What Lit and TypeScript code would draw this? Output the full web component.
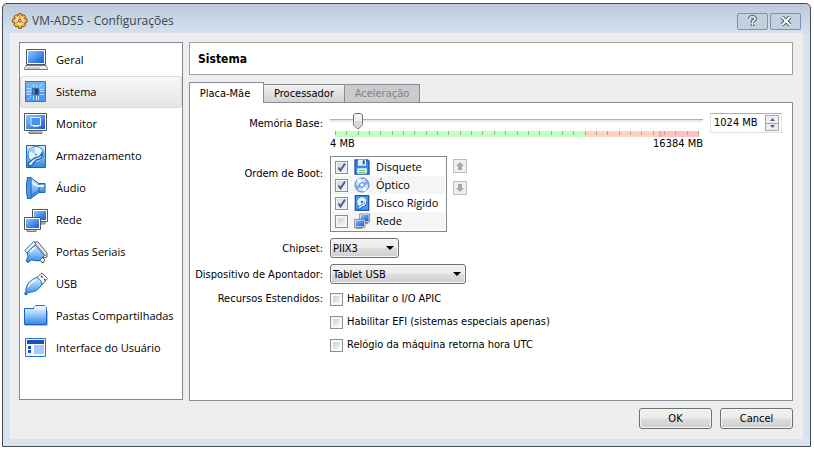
import { LitElement, html, svg, css, type TemplateResult } from "lit";
import { customElement, state } from "lit/decorators.js";
import { classMap } from "lit/directives/class-map.js";

const defs = svg`<defs>
  <linearGradient id="b" x1="0" y1="0" x2="1" y2="1"><stop offset="0" stop-color="#8cc8ff"/><stop offset="1" stop-color="#1257dc"/></linearGradient>
  <linearGradient id="l" x1="0" y1="0" x2="0" y2="1"><stop offset="0" stop-color="#d8f1ff"/><stop offset="1" stop-color="#2f87ea"/></linearGradient>
</defs>`;

const network = svg`
  <path d="M13 14h8v2h-8zM3 21.500h9v2H3z" fill="#ccc" stroke="#777"/>
  <path d="M8.500 1.500h15v12h-15z" fill="#fff" stroke="#555"/><path d="M10 3h12v9H10z" fill="url(#b)"/>
  <path d="M.5 9.500h16v12H.5z" fill="#fff" stroke="#555"/><path d="M2 11h13v9H2z" fill="url(#b)"/>`;

const disk = svg`
  <path d="M2.500 1.500h19v22h-19z" fill="url(#l)" stroke="#1b62b8"/>
  <circle cx="12" cy="10.500" r="8" fill="#e4f5ff" stroke="#2f7fd0"/>
  <path d="M12 10.500 5 7a8 8 0 0 1 5-4z" fill="#9ed0f6"/>
  <circle cx="12" cy="10.500" r="1.500" fill="#2f7fd0" stroke="#fff"/>
  <path d="M18 9c1 5-2 7-6 7l-4 5c-2 2-5 0-3-2.500l5-4c2-2 5 1 8-5.500z" fill="#fff" stroke="#1b62b8" stroke-width="1.500"/>`;

const icons: Record<string, TemplateResult> = {
  general: svg`<path d="M2.500 1.500h19v15h-19z" fill="#fff" stroke="#555"/><path d="M4 3h16v12H4z" fill="url(#b)"/>
    <path d="M2 17.500h20l1.500 3v1H.5v-1z" fill="#eee" stroke="#777"/><path d="M3 20h13" stroke="#aaa"/>`,
  system: svg`<path d="M1.500 1.500h20v20h-20z" fill="#4a9af0" stroke="#2f7ad8"/><path d="M2 2h19v7L2 15z" fill="#70b2f6"/>
    <path d="M8.500 8.500h6v6h-6z" fill="#243c60" stroke="#3568a8"/><path d="M9 9h2v5H9z" fill="#5a7aa0"/>
    <path d="M3 8.500h4M3 11.500h4M3 14.500h4M9.500 4v3M12.500 5v2M15 7l3-3M16 9.500h4M16 11.500h4M16 14.500h4M9.500 16v4M12.500 16v4M14.500 16v4M7 16l-3 4" stroke="#bfe0ff" fill="none"/>`,
  display: svg`<path d="M.5 1.500h22v17H.5z" fill="#fff" stroke="#555"/><path d="M2 3h19v14H2z" fill="url(#b)"/>
    <path d="M7 5.500h9.500v8H7z" fill="#4d91ef" stroke="#e4f2ff"/><path d="M9 14.500h6" stroke="#a8d2ff"/><path d="M5 20h13v1.500H5z" fill="#ddd" stroke="#777"/>`,
  storage: disk,
  audio: svg`<path d="M13 7.500h8v9h-8z" fill="#62a9ec" stroke="#1b62b8"/><path d="M3.500 1.500h3l8.500 6v9l-8.500 6h-3z" fill="url(#l)" stroke="#1b62b8"/>
    <path d="M3.500 1.500h3.500v21H3.500L2.500 16V8z" fill="#4c9ce8" stroke="#1b62b8"/><path d="M8 7l6 3h6" stroke="#e4f5ff" stroke-width="2" fill="none"/><path d="M8 19l6-4h6" stroke="#1f6fd0" fill="none"/>`,
  network,
  serial: svg`<path d="m10 2 4 0 9 11v4l-3 1L8 6zM17 16l4 4-2 3-4-3z" fill="#f2f2f2" stroke="#555"/><path d="m11 3 11 13" stroke="#888"/>
    <path d="M11.500 5.500 20.500 15.500 15 21 7.500 20 4 22.500 2 21l2-4-1-6z" fill="url(#l)" stroke="#1b62b8"/>
    <path d="m.8 10.500 9-9 2 2.500-9 9z" fill="#eef6ff" stroke="#2c68ac"/><path d="m6 12 5-5" stroke="#fff" stroke-width="1.500"/>`,
  usb: svg`<path d="m12 6 6-5 5.500 5.500L18 13z" fill="#fff" stroke="#666"/><path d="m17 4 1.500 1.500M20 7l1.500 1.500" stroke="#444" stroke-width="1.500"/>
    <path d="M12.500 5.500c3 1 5 3 5.500 6.500-2 4-6 8-11 8l-3 .5-1.500 2.500-2-1L2 19c-1-5 5-12 10.500-13.500z" fill="url(#l)" stroke="#1b62b8"/><path d="M4 15c2-4 5-6 8-7" stroke="#eefaff" stroke-width="1.500" fill="none"/>`,
  folder: svg`<path d="M9.500 6V3.500l2-2h9l2 2V8" fill="#e2f3ff" stroke="#2c72c0"/><path d="M.5 4.500h22v16H.5z" fill="url(#l)" stroke="#1b62b8"/>
    <path d="M10 2.500h12v3H10z" fill="#e2f3ff"/><path d="M1 21.500h22.500V7" stroke="#bbb" fill="none"/>`,
  ui: svg`<path d="M1.500 2.500h20v18h-20z" fill="#f4faff" stroke="#2c72c8"/><path d="M3 4h17v4H3z" fill="#1c50b4"/><path d="M4 10h3v3H4zM4 14h3v3H4z" fill="#1c50b4"/><path d="M10 9h10v9H10z" fill="#a5c8ff"/>`,
  floppy: svg`<path d="M1.500 1.500h19l2 2v19h-21z" fill="#3a8ae8" stroke="#1a54b8" stroke-width="2"/><path d="M6 1h12v9H6z" fill="#e4f5ff"/><path d="M13 2h3v6h-3z" fill="#1a54b8"/><path d="M5 14h14v8H5z" fill="#fff"/><path d="M7 17h10M7 20h10" stroke="#5ac05a" stroke-width="1.500"/>`,
  optical: svg`<circle cx="12" cy="12" r="10.500" fill="#c9e2fb" stroke="#3a78cc" stroke-width="1.500"/><path d="M12 12 4 5a10 10 0 0 1 6-3zM12 12l8 7a10 10 0 0 1-6 3z" fill="#fff"/><path d="m12 12 7-7a10 10 0 0 1 3 6zM12 12l-7 7a10 10 0 0 1-3-6z" fill="#7dacf0"/><circle cx="12" cy="12" r="3.500" fill="#fff" stroke="#3a78cc" stroke-width="1.500"/>`,
  harddisk: svg`<path d="M2 1h20v22H2z" fill="#4a9af0" stroke="#1b56b0" stroke-width="2"/><circle cx="12" cy="10.500" r="7" fill="#e4f5ff"/><circle cx="12" cy="10.500" r="2" fill="#2f6fd0"/><path d="M18 9c1 5-3 7-6 7l-5 5" fill="none" stroke="#1b56b0" stroke-width="4"/><path d="M17.500 9c1 5-3 7-6 7l-4 4" fill="none" stroke="#fff" stroke-width="2"/>`,
  gear: svg`<path d="m10 1 4 0 .8 3 2.700-1.600 3 3L19 8l3.500 1v5L19 15l1.500 3-3 3-2.700-1.500L14 23h-4l-1-3.500L6 21l-3-3 1.500-3L1 14V9.500L4.500 8 3 5.400l3-3L9 4z" fill="#f8b84c" stroke="#8a4c12" stroke-width="1.500"/><circle cx="11.700" cy="11.700" r="6.500" fill="#ffdf9a"/><circle cx="11.700" cy="11.700" r="2" fill="#fff" stroke="#5a3410" stroke-width="1.500"/><path d="M11.700 5v4M6 15l3-2M17 15l-3-2" stroke="#b8731f" stroke-width="1.500"/>`,
};

const icon = (name: string, cls: string) =>
  html`<svg class=${cls} viewBox="0 0 24 24" aria-hidden="true">${defs}${icons[name]}</svg>`;

const pages = [
  ["general", "Geral"], ["system", "Sistema"], ["display", "Monitor"], ["storage", "Armazenamento"], ["audio", "Áudio"],
  ["network", "Rede"], ["serial", "Portas Seriais"], ["usb", "USB"], ["folder", "Pastas Compartilhadas"], ["ui", "Interface do Usuário"],
];
const boot: [string, string, boolean][] = [
  ["floppy", "Disquete", true], ["optical", "Óptico", true], ["harddisk", "Disco Rígido", true], ["network", "Rede", false],
];
const extended = ["Habilitar o I/O APIC", "Habilitar EFI (sistemas especiais apenas)", "Relógio da máquina retorna hora UTC"];

@customElement("app-root")
export class AppRoot extends LitElement {
  @state() private page = "system";
  @state() private memory = 1024;

  static styles = css`
    :host {
      display: flex; box-sizing: border-box; min-height: 100vh; padding: 3px 3px 4px 2px; background: #fff;
      font: 11px/14px "DejaVu Sans Condensed", "Liberation Sans", sans-serif; color: #000;
    }
    * { box-sizing: border-box; }
    button, input, select { font: inherit; color: inherit; margin: 0; padding: 0; }
    svg { display: block; flex: none; }
    .window {
      flex: 1; min-width: 0; display: flex; flex-direction: column; padding: 0 7px 7px;
      border: 1px solid #484a4d; border-radius: 5px 5px 0 0;
      background: linear-gradient(#bccad9, #d7e3f1 32px, #d7e3f1);
    }
    .titlebar { display: flex; align-items: center; gap: 4px; height: 29px; padding: 5px 2px 0; }
    .title { flex: 1; margin: 0; font: 12px/18px "Open Sans", sans-serif; color: #3c4650; }
    .i16 { width: 16px; height: 16px; }
    .i24 { width: 24px; height: 24px; }
    .caption { display: flex; align-items: center; justify-content: center; width: 31px; height: 17px; border: 1px solid #8290ac; border-radius: 2px; background: #c3d0df; }
    .caption + .caption { margin-left: -2px; }
    .body { flex: 1; display: grid; grid-template-columns: 164px minmax(0, 1fr); grid-template-rows: 1fr auto; gap: 0 6px; padding: 9px 10px 10px 9px; background: #eee; }
    .pages { display: flex; flex-direction: column; padding: 1px 0 0; border: 1px solid #828790; background: #fff; margin-bottom: 1px; }
    .page { display: flex; align-items: center; gap: 8px; height: 32px; padding: 0 3px; border: 1px solid transparent; border-radius: 3px; background: none; font: 11px/16px "Open Sans", sans-serif; text-align: left; white-space: nowrap; }
    .page.on { border-color: #d9d9d9; background: linear-gradient(#f8f8f8, #e5e5e5); }
    .main { display: flex; flex-direction: column; min-width: 0; }
    .heading { margin: 0 0 7px; height: 33px; padding: 0 8px; border: 1px solid #a0a0a0; background: #fff; font-size: 12px; line-height: 32px; }
    .tabs { display: flex; align-items: flex-end; height: 20px; position: relative; }
    .tab { height: 18px; padding: 1px 0 0; border: 1px solid #898c95; border-left-width: 0; border-bottom: 0; background: linear-gradient(#f2f2f2, #d2d2d2); line-height: 16px; width: 81px; }
    .tab.on { height: 21px; width: 75px; margin-bottom: -1px; padding-right: 3px; border-left-width: 1px; background: #fff; }
    .tab:disabled { width: 75px; background: #cbcbcb; color: #838383; }
    .pane { flex: 1; border: 1px solid #898c95; background: #fff; padding: 10px 10px 10px 4px; display: grid; grid-template-columns: 129px minmax(0, 1fr); gap: 6px 7px; align-content: start; }
    .label { text-align: right; white-space: nowrap; }
    .label.memory { padding-top: 4px; }
    .label.order { padding-top: 11px; }
    .label.combo { padding-top: 4px; }
    .row { display: flex; align-items: flex-start; gap: 7px; }
    .scale { flex: 1; min-width: 0; }
    .slider { display: block; appearance: none; width: 100%; height: 17px; background: linear-gradient(#b0b0b0, #b0b0b0) 0 6px / 100% 1px no-repeat, linear-gradient(#e8e9e9, #e8e9e9) 0 7px / 100% 2px no-repeat; }
    .slider::-webkit-slider-thumb {
      appearance: none; width: 10px; height: 17px; border: 0;
      background: url("data:image/svg+xml,%3Csvg xmlns='http://www.w3.org/2000/svg' width='10' height='17'%3E%3Cpath d='M2 .5h6L9.500 2v10L5 16 .5 12V2z' fill='%23f0f0f0' stroke='%23707070'/%3E%3Cpath d='M2 8h6v4l-3 3-3-3z' fill='%23d8d8d8'/%3E%3C/svg%3E");
    }
    .ticks { display: flex; justify-content: space-between; height: 6px; margin: 1px 4px 0 5px; background: linear-gradient(90deg, #c2ffc2 69%, #ffd2bf 69%, #ffd2bf 89%, #ff9e8f 89%, #ffc1c1 90%); }
    .tick { width: 1px; height: 4px; background: #a2aa9a; }
    .ends { display: flex; justify-content: space-between; line-height: 14px; height: 13px; }
    .spin { display: flex; width: 72px; height: 20px; padding: 1px 2px 1px 3px; border: 1px solid #dce3ea; border-top-color: #abadb3; border-radius: 1px; }
    .spin input { width: 0; flex: 1; border: 0; outline: 0; background: none; }
    .steps { display: flex; flex-direction: column; width: 14px; border: 1px solid #a9a9a9; }
    .step { display: flex; flex: 1; align-items: center; justify-content: center; border: 0; background: #eee; }
    .step + .step { border-top: 1px solid #a9a9a9; }
    .boot { width: 117px; padding: 1px; margin: 0; border: 1px solid #828790; list-style: none; }
    .boot li { height: 18px; padding-left: 3px; }
    .boot li:nth-child(even) { background: #f5f5f5; }
    .boot label { display: flex; align-items: center; height: 18px; gap: 6px; font: 11px/18px "Open Sans", sans-serif; white-space: nowrap; }
    .check { appearance: none; flex: none; width: 13px; height: 13px; border: 1px solid #8e8f8f; background: linear-gradient(135deg, #cbcfd5, #f6f6f6) content-box; padding: 2px; outline: 1px solid #f4f4f4; outline-offset: -2px; }
    .check:checked { padding: 0; background: url("data:image/svg+xml,%3Csvg xmlns='http://www.w3.org/2000/svg' width='11' height='11'%3E%3Cpath d='M2.500 5.500 4.500 8.500 9 1.500' fill='none' stroke='%234b5f97' stroke-width='2'/%3E%3C/svg%3E") no-repeat, linear-gradient(135deg, #d0d4d9, #f6f6f6); }
    .moves { display: flex; flex-direction: column; gap: 8px; padding-top: 3px; margin-left: -1px; }
    .move { display: flex; align-items: center; justify-content: center; width: 14px; height: 14px; border: 1px solid #bcbcbc; background: #f0f0f0; }
    .push, .combo-box { border: 1px solid #707070; border-radius: 3px; background: linear-gradient(#f2f2f2, #ebebeb 49%, #dddddd 51%, #cfcfcf); box-shadow: inset 0 0 0 1px #f6f6f6; }
    .combo-box {
      appearance: none; display: block; height: 20px; padding: 1px 18px 0 2px;
      background: url("data:image/svg+xml,%3Csvg xmlns='http://www.w3.org/2000/svg' width='8' height='4'%3E%3Cpath d='M0 0h8L4 4z'/%3E%3C/svg%3E") right 4px center no-repeat, linear-gradient(#f2f2f2, #ebebeb 49%, #dddddd 51%, #cfcfcf);
    }
    .combo-box.short { width: 69px; }
    .combo-box.long { width: 136px; }
    .label.extended { padding-top: 2px; }
    .options { display: flex; flex-direction: column; gap: 9px; padding-top: 2px; }
    .options label { display: flex; align-items: center; gap: 4px; height: 14px; }
    .footer { grid-column: 1 / -1; display: flex; justify-content: flex-end; gap: 8px; padding-top: 7px; }
    .push { width: 73px; height: 21px; }
  `;

  private arrow(up: boolean) {
    return html`<svg width="8" height="8" viewBox="0 0 8 8" aria-hidden="true"><path d=${up ? "M4 0 8 4H6v4H2V4H0z" : "M4 8 0 4h2V0h4v4h2z"} fill="#a8a8a8"/></svg>`;
  }

  render() {
    const setMemory = (v: number) => (this.memory = Math.min(16384, Math.max(4, v || 4)));
    return html`
      <div class="window">
        <header class="titlebar">
          ${icon("gear", "i16")}
          <h1 class="title">VM-ADS5 - Configurações</h1>
          <button class="caption" aria-label="Ajuda"><svg width="9" height="12" viewBox="0 0 9 12"><path d="M2 4V3l1-1h3l1 1v1.500L4.500 6.500V8M4.500 9v2" fill="none" stroke="#4d5664" stroke-width="3.500"/><path d="M2 4.500V3l1-1h3l1 1v1.500L4.500 6.500V8M4.500 9v1.500" fill="none" stroke="#fff" stroke-width="1.500"/></svg></button>
          <button class="caption" aria-label="Fechar"><svg width="12" height="10" viewBox="0 0 12 10"><path d="m2 1 8 8M10 1 2 9" stroke="#4d5664" stroke-width="4"/><path d="m2 1 8 8M10 1 2 9" stroke="#fff" stroke-width="2"/></svg></button>
        </header>
        <div class="body">
          <nav class="pages">
            ${pages.map(([id, name]) => html`<button class=${classMap({ page: true, on: id === this.page })} @click=${() => (this.page = id)}>${icon(id, "i24")}${name}</button>`)}
          </nav>
          <main class="main">
            <h2 class="heading">Sistema</h2>
            <div class="tabs" role="tablist">
              <button class="tab on" role="tab" aria-selected="true">Placa-Mãe</button>
              <button class="tab" role="tab">Processador</button>
              <button class="tab" role="tab" disabled>Aceleração</button>
            </div>
            <section class="pane">
              <label class="label memory" for="memory">Memória Base:</label>
              <div class="row">
                <div class="scale">
                  <input class="slider" id="memory" type="range" min="4" max="16384" .value=${String(this.memory)} @input=${(e: Event) => setMemory(Number((e.target as HTMLInputElement).value))} />
                  <div class="ticks">${Array.from({ length: 33 }, () => html`<span class="tick"></span>`)}</div>
                  <div class="ends"><span>4 MB</span><span>16384 MB</span></div>
                </div>
                <div class="spin">
                  <input aria-label="Memória Base" .value=${`${this.memory} MB`} @change=${(e: Event) => setMemory(parseInt((e.target as HTMLInputElement).value))} />
                  <div class="steps">
                    <button class="step" aria-label="Aumentar" @click=${() => setMemory(this.memory + 4)}><svg width="5" height="3" viewBox="0 0 5 3"><path d="M0 3 2.500 0 5 3z" fill="#4a63a8"/></svg></button>
                    <button class="step" aria-label="Diminuir" @click=${() => setMemory(this.memory - 4)}><svg width="5" height="3" viewBox="0 0 5 3"><path d="M0 0h5L2.500 3z" fill="#4a63a8"/></svg></button>
                  </div>
                </div>
              </div>

              <span class="label order">Ordem de Boot:</span>
              <div class="row">
                <ul class="boot">
                  ${boot.map(([id, name, on]) => html`<li><label><input class="check" type="checkbox" ?checked=${on} />${icon(id, "i16")}${name}</label></li>`)}
                </ul>
                <div class="moves">
                  <button class="move" aria-label="Mover para cima">${this.arrow(true)}</button>
                  <button class="move" aria-label="Mover para baixo">${this.arrow(false)}</button>
                </div>
              </div>

              <label class="label combo" for="chipset">Chipset:</label>
              <select class="combo-box short" id="chipset"><option>PIIX3</option></select>

              <label class="label combo" for="pointer">Dispositivo de Apontador:</label>
              <select class="combo-box long" id="pointer"><option>Tablet USB</option></select>

              <span class="label extended">Recursos Estendidos:</span>
              <div class="options">
                ${extended.map((name) => html`<label><input class="check" type="checkbox" />${name}</label>`)}
              </div>
            </section>
          </main>
          <footer class="footer">
            <button class="push">OK</button>
            <button class="push">Cancel</button>
          </footer>
        </div>
      </div>`;
  }
}
